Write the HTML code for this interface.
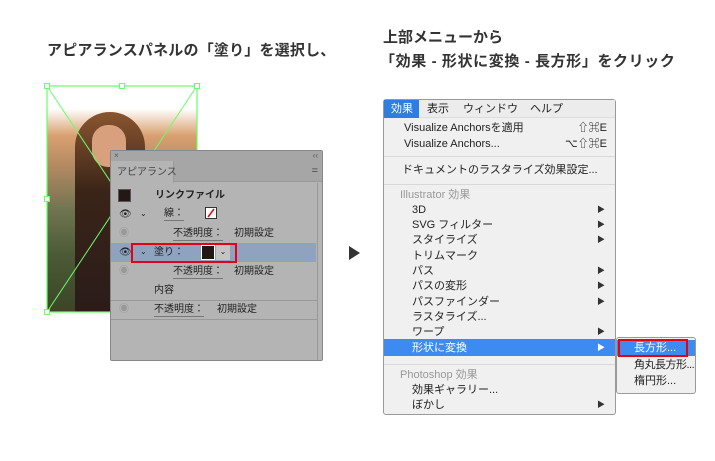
<!DOCTYPE html>
<html><head><meta charset="utf-8"><style>
*{margin:0;padding:0;box-sizing:border-box}
body{width:715px;height:461px;background:#fff;position:relative;overflow:hidden;font-family:"Liberation Sans","Noto Sans CJK JP",sans-serif;color:#222}
.a{position:absolute;white-space:nowrap;line-height:14px}
.t{font-size:15px;font-weight:bold;color:#333;line-height:20px}
.p{font-size:10px;color:#222}
.m{font-size:11px;color:#222;left:20px}
.arr{position:absolute;right:10px;font-size:8px;color:#333;line-height:14px}
.u{border-bottom:1px solid #777;line-height:12px}
.dim{color:#999}
</style></head><body>
<div class="a t" style="left:47px;top:41px;letter-spacing:0.2px">アピアランスパネルの「塗り」を選択し、</div>
<div class="a t" style="left:383px;top:28px">上部メニューから</div>
<div class="a t" style="left:380px;top:52px;letter-spacing:0.6px">「効果 - 形状に変換 - 長方形」をクリック</div>

<!-- photo -->
<div class="a" style="left:47px;top:86px;width:150px;height:226px;background:linear-gradient(180deg,#fff 0%,#fff 10%,#d9a070 22%,#b48a63 35%,#6f7450 55%,#4b5a36 75%,#3b4528 100%)"></div>
<div class="a" style="left:75px;top:112px;width:70px;height:200px;border-radius:35px 35px 0 0;background:linear-gradient(180deg,#8a5530,#3a2418 40%,#2a1c1a)"></div>
<div class="a" style="left:92px;top:125px;width:34px;height:42px;border-radius:16px;background:#d8a07c"></div>
<svg class="a" style="left:44px;top:83px" width="160" height="232">
<rect x="3" y="3" width="150" height="226" fill="none" stroke="#6f6" stroke-width="1.2"/>
<line x1="3" y1="3" x2="153" y2="229" stroke="#6f6"/>
<line x1="153" y1="3" x2="3" y2="229" stroke="#6f6"/>
<g fill="#fff" stroke="#6f6"><rect x="0.5" y="0.5" width="5" height="5"/><rect x="75.5" y="0.5" width="5" height="5"/><rect x="150.5" y="0.5" width="5" height="5"/><rect x="0.5" y="113.5" width="5" height="5"/><rect x="0.5" y="226.5" width="5" height="5"/></g>
</svg>

<!-- panel -->
<div class="a" style="left:110px;top:150px;width:213px;height:211px;background:#b4b4b4;border:1px solid #888;border-radius:2px">
<div class="a" style="left:0;top:0;width:211px;height:31px;background:#a6a6a6"></div>
<div class="a" style="left:3px;top:0;font-size:8px;color:#555;line-height:10px">×</div>
<div class="a" style="right:4px;top:0;font-size:8px;color:#555;line-height:10px">‹‹</div>
<div class="a" style="left:0;top:10px;width:63px;height:22px;background:#b4b4b4;border-right:1px solid #999"></div>
<div class="a" style="left:63px;top:30px;width:148px;height:1px;background:#999"></div>
<div class="a p" style="left:6px;top:15px;color:#444">アピアランス</div>
<div class="a" style="right:4px;top:13px;font-size:11px;color:#444">=</div>
<div class="a" style="left:7px;top:38px;width:13px;height:13px;background:#231815;border:1px solid #555"></div>
<div class="a p" style="left:44px;top:38px;font-weight:bold">リンクファイル</div>
<div class="a p" style="left:8px;top:57px">👁</div>
<div class="a p" style="left:29px;top:56px;font-size:8px">⌄</div>
<div class="a p u" style="left:53px;top:57px">線：</div>
<svg class="a" style="left:94px;top:56px" width="12" height="12"><rect x="0.5" y="0.5" width="11" height="11" fill="#fff" stroke="#333"/><line x1="3" y1="10" x2="9" y2="2" stroke="#e00" stroke-width="1.5"/></svg>
<div class="a p u" style="left:62px;top:77px">不透明度：</div>
<div class="a p" style="left:123px;top:76px">初期設定</div>
<div class="a p dim" style="left:8px;top:76px">◉</div>
<div class="a" style="left:0;top:92px;width:205px;height:19px;background:#8fa3c1"></div>
<div class="a p" style="left:8px;top:95px">👁</div>
<div class="a p" style="left:29px;top:94px;font-size:8px">⌄</div>
<div class="a p" style="left:43px;top:95px">塗り：</div>
<div class="a" style="left:90px;top:94px;width:14px;height:15px;background:#231815;border:1px solid #fff"></div>
<div class="a" style="left:105px;top:94px;width:14px;height:15px;background:#c4c4c4;font-size:8px;text-align:center">⌄</div>
<div class="a" style="left:20px;top:92px;width:106px;height:20px;border:2px solid #e60012"></div>
<div class="a p dim" style="left:8px;top:114px">◉</div>
<div class="a p u" style="left:62px;top:115px">不透明度：</div>
<div class="a p" style="left:123px;top:114px">初期設定</div>
<div class="a p" style="left:43px;top:133px">内容</div>
<div class="a" style="left:0;top:149px;width:206px;height:1px;background:#999"></div>
<div class="a p dim" style="left:8px;top:152px">◉</div>
<div class="a p u" style="left:43px;top:153px">不透明度：</div>
<div class="a p" style="left:106px;top:152px">初期設定</div>
<div class="a" style="left:0;top:168px;width:206px;height:1px;background:#999"></div>
<div class="a" style="left:206px;top:32px;width:1px;height:177px;background:#999"></div>
</div>

<div class="a" style="left:349px;top:246px;width:0;height:0;border-left:11px solid #333;border-top:7px solid transparent;border-bottom:7px solid transparent"></div>

<!-- menu -->
<div class="a" style="left:383px;top:99px;width:233px;height:316px;background:#f0f0f0;border:1px solid #999;border-radius:3px">
<div class="a" style="left:0;top:0;width:231px;height:18px;background:#ececec;border-bottom:1px solid #ddd"></div>
<div class="a" style="left:0;top:0;width:35px;height:18px;background:#2e7de0"></div>
<div class="a" style="left:7px;top:2px;font-size:11px;color:#fff">効果</div>
<div class="a" style="left:43px;top:2px;font-size:11px">表示</div>
<div class="a" style="left:79px;top:2px;font-size:11px">ウィンドウ</div>
<div class="a" style="left:146px;top:2px;font-size:11px">ヘルプ</div>
<div class="a m" style="top:21px">Visualize Anchorsを適用</div><div class="a" style="right:8px;top:21px;font-size:11px">⇧⌘E</div>
<div class="a m" style="top:37px">Visualize Anchors...</div><div class="a" style="right:8px;top:37px;font-size:11px">⌥⇧⌘E</div>
<div class="a" style="left:0;top:56px;width:231px;height:1px;background:#d8d8d8"></div>
<div class="a m" style="left:18px;top:63px">ドキュメントのラスタライズ効果設定...</div>
<div class="a" style="left:0;top:84px;width:231px;height:1px;background:#d8d8d8"></div>
<div class="a m dim" style="left:16px;top:88px">Illustrator 効果</div>
<div class="a m" style="left:28px;top:103px">3D</div><div class="arr" style="top:103px">▶</div>
<div class="a m" style="left:28px;top:118px">SVG フィルター</div><div class="arr" style="top:118px">▶</div>
<div class="a m" style="left:28px;top:133px">スタイライズ</div><div class="arr" style="top:133px">▶</div>
<div class="a m" style="left:28px;top:149px">トリムマーク</div>
<div class="a m" style="left:28px;top:164px">パス</div><div class="arr" style="top:164px">▶</div>
<div class="a m" style="left:28px;top:179px">パスの変形</div><div class="arr" style="top:179px">▶</div>
<div class="a m" style="left:28px;top:195px">パスファインダー</div><div class="arr" style="top:195px">▶</div>
<div class="a m" style="left:28px;top:210px">ラスタライズ...</div>
<div class="a m" style="left:28px;top:225px">ワープ</div><div class="arr" style="top:225px">▶</div>
<div class="a" style="left:0;top:239px;width:231px;height:17px;background:#3d8af0"></div>
<div class="a m" style="left:28px;top:241px;color:#fff">形状に変換</div><div class="arr" style="top:241px;color:#fff">▶</div>
<div class="a" style="left:0;top:264px;width:231px;height:1px;background:#d8d8d8"></div>
<div class="a m dim" style="left:16px;top:268px">Photoshop 効果</div>
<div class="a m" style="left:28px;top:283px">効果ギャラリー...</div>
<div class="a m" style="left:28px;top:298px">ぼかし</div><div class="arr" style="top:298px">▶</div>
</div>
<div class="a" style="left:616px;top:337px;width:80px;height:57px;background:#f0f0f0;border:1px solid #999;border-radius:3px">
<div class="a" style="left:0;top:2px;width:78px;height:16px;background:#3d8af0"></div>
<div class="a" style="left:1px;top:1px;width:70px;height:18px;border:2px solid #e60012"></div>
<div class="a" style="left:17px;top:3px;font-size:11px;color:#fff">長方形...</div>
<div class="a" style="left:17px;top:20px;font-size:11px;letter-spacing:-0.5px">角丸長方形...</div>
<div class="a" style="left:17px;top:36px;font-size:11px">楕円形...</div>
</div>
</body></html>
